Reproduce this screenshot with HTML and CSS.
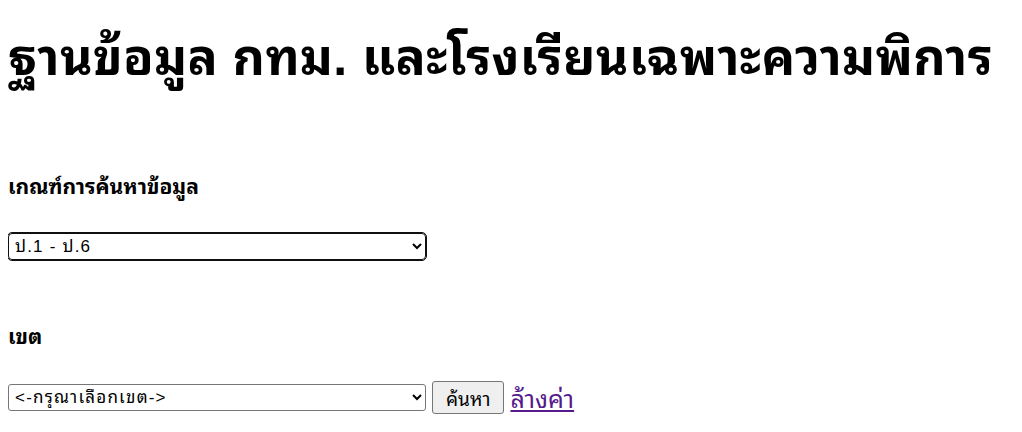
FILE: index.html
```html
<!DOCTYPE html>
<html lang="th">
<head>
<meta charset="utf-8">
<title>ฐานข้อมูล กทม.</title>
<link rel="stylesheet" href="styles.css">
</head>
<body class="page">
<h1 class="title">ฐานข้อมูล กทม. และโรงเรียนเฉพาะความพิการ</h1>
<form class="search">
  <h4 class="label">เกณฑ์การค้นหาข้อมูล</h4>
  <select class="field field-focus">
    <option>ป.1 - ป.6</option>
  </select>
  <h4 class="label label-gap">เขต</h4>
  <div class="row">
    <select class="field">
      <option>&lt;-กรุณาเลือกเขต-&gt;</option>
    </select>
    <button type="button" class="btn">ค้นหา</button>
    <a class="reset" href="#">ล้างค่า</a>
  </div>
</form>
</body>
</html>
```
FILE: styles.css
```css
.page {
  margin: 8px;
  font-family: "Liberation Sans", "Noto Sans Thai Looped", sans-serif;
  color: #000;
  background: #fff;
}
.title {
  font-family: "Liberation Sans", "Noto Sans Thai Looped", sans-serif;
  font-size: 50px;
  line-height: 60px;
  letter-spacing: 0.4px;
  font-weight: bold;
  margin: 20px 0 0;
}
.search {
  display: flex;
  flex-direction: column;
  align-items: flex-start;
}
.label {
  font-size: 21px;
  line-height: 24px;
  font-weight: bold;
  margin: 87px 0 0;
}
.label-gap {
  margin-top: 65px;
}
.field {
  box-sizing: border-box;
  width: 418px;
  height: 27px;
  margin: 34px 0 0;
  padding: 0 2px;
  font-family: "Liberation Sans", "Noto Sans Thai Looped", sans-serif;
  font-size: 17px;
  letter-spacing: 1.2px;
  color: #000;
  background: #fff;
  border: 1px solid #767676;
  border-radius: 3px;
}
.field-focus {
  border-color: #101010;
  outline: 1px solid #101010;
  outline-offset: 0;
  border-radius: 4px;
}
.row {
  display: flex;
  align-items: center;
  gap: 6px;
  margin-top: 28px;
}
.row .field {
  margin-top: 0;
}
.btn {
  box-sizing: border-box;
  height: 33px;
  padding: 0 13px;
  font-family: "Liberation Sans", "Noto Sans Thai Looped", sans-serif;
  font-size: 19px;
  color: #000;
  background: #efefef;
  border: 1px solid #767676;
  border-radius: 3px;
}
.reset {
  font-family: "Liberation Sans", "Noto Sans Thai Looped", sans-serif;
  font-size: 25px;
  color: #551a8b;
}
```
